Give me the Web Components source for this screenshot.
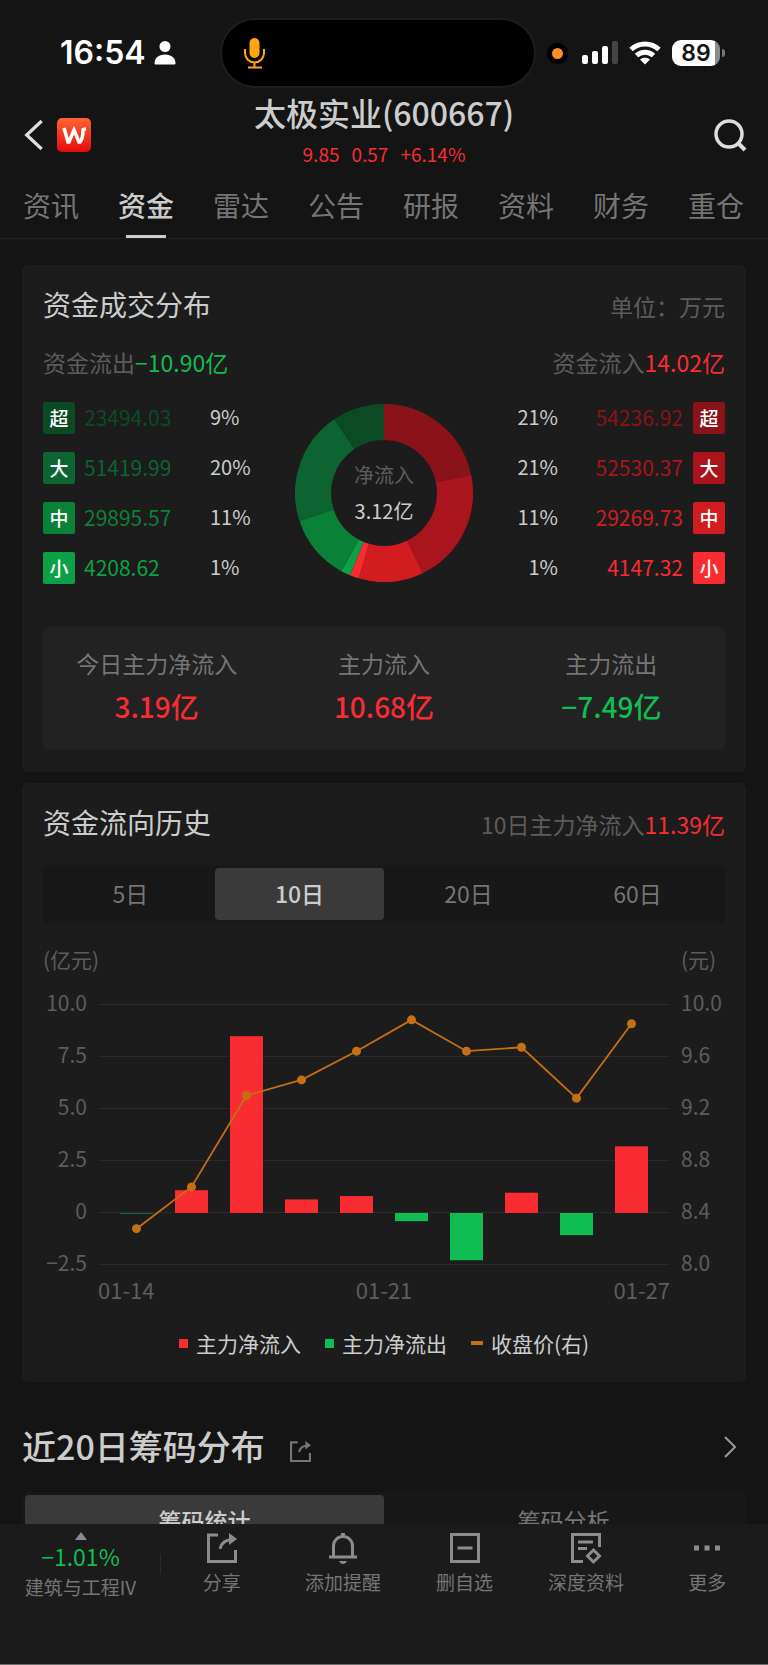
<!DOCTYPE html>
<html lang="zh-CN">
<head>
<meta charset="utf-8">
<meta name="viewport" content="width=device-width, initial-scale=1">
<title>太极实业(600667) 资金</title>
<style>
  :root {
    --bg: #141414;
    --card: #1c1c1c;
    --text: #cccccc;
    --muted: #757575;
    --dim: #5c5c5c;
    --red: #f92c32;
    --green: #0fbd53;
    --orange: #c46f13;
  }
  body {
    margin: 0;
    background: var(--bg);
    color: var(--text);
    font-family: "Noto Sans CJK SC", "Noto Sans", sans-serif;
  }
</style>
</head>
<body>
<stock-app></stock-app>

<script>
const ICONS = {
  back: '<path d="M21 1 5 16l16 15" stroke-width="3.500"/>',
  search: '<circle cx="15" cy="15" r="13" stroke-width="3.500"/><path d="m24 24 7 7" stroke-width="4"/>',
  share: '<path d="M11 2H1.500V28.500H28.500V17" stroke-width="3"/><path d="M13 16c1-6 5-9 12-9.500" stroke-width="3"/><path d="m22 0 8 6-8 6z" fill="currentColor" stroke="none"/>',
  bell: '<path d="M5.500 24V13a9.500 9.500 0 0 1 19 0v11M1 24h28" stroke-width="3"/><path d="M15 0v4" stroke-width="4"/><path d="M11 28h8c-1 2-2 3-4 3s-3-1-4-3z" fill="currentColor" stroke="none"/>',
  remove: '<path d="M1.500 1.500h27v27h-27zM7.500 15h15" stroke-width="3"/>',
  report: '<path d="M12 28.500H1.500V1.500h27V14M7 9h15M7 15.500h9" stroke-width="3"/><path d="m22.500 17 6 6-6 6-6-6z" stroke-width="3"/>',
  more: '<path d="M2 12.500h5v5H2zM12.500 12.500h5v5h-5zM23 12.500h5v5h-5z" fill="currentColor" stroke="none"/>',
  next: '<path d="m9 5 10 10L9 25" stroke-width="2"/>',
  mic: '<rect x="10.500" y="0" width="10" height="20" rx="5" fill="currentColor" stroke="none"/><path d="M6 11v4a9.500 9.500 0 0 0 19 0v-4M15.500 25v4M9 29.500h14" stroke-width="2"/>',
  user: '<g fill="currentColor" stroke="none"><circle cx="15" cy="8.500" r="5.500"/><path d="M4.500 25.500c0-5.500 4-9 10.500-9s10.500 3.500 10.500 9q0 1-1 1h-19q-1 0-1-1z"/></g>',
};

class AppIcon extends HTMLElement {
  connectedCallback() {
    const box = this.getAttribute('box') || '0 0 30 30';
    this.attachShadow({ mode: 'open' });
    this.shadowRoot.innerHTML = `
      <style>
        :host { display: block; width: 30px; height: 30px; flex: none; }
        svg { display: block; width: 100%; height: 100%; overflow: visible; }
      </style>
      <svg viewBox="${box}" fill="none" stroke="currentColor" aria-hidden="true">${ICONS[this.getAttribute('name')]}</svg>
    `;
  }
}

class StatusBar extends HTMLElement {
  constructor() {
    super();
    this.attachShadow({ mode: 'open' });
    this.shadowRoot.innerHTML = `
      <style>
        :host {
          display: flex;
          align-items: center;
          height: 70px;
          padding: 18px 43px 7px 60px;
          color: #fff;
          font-family: Inter, sans-serif;
        }
        .left { display: flex; align-items: center; gap: 4px; width: 160px; }
        .time { font-size: 32px; line-height: 40px; font-weight: 600; }
        app-icon { width: 30px; height: 30px; }
        .island {
          flex: 1;
          display: flex;
          align-items: center;
          box-sizing: border-box;
          height: 70px;
          padding-left: 17px;
          border: 2px solid #1d1d1d;
          border-radius: 35px;
          background: #000;
          color: #ffa50f;
        }
        .right { display: flex; align-items: center; margin-left: 11px; }
        .dot { width: 11px; height: 11px; border: 5px solid #000; border-radius: 50%; background: #ff8d28; }
        .signal { margin-left: 14px; }
        .wifi { margin-left: 10px; }
        .battery {
          display: flex;
          align-items: center;
          margin-left: 11px;
        }
        .level {
          width: 48px;
          border-radius: 9px;
          background: linear-gradient(to right, #fff 43px, #8b8b8b 43px);
          color: #141414;
          font-size: 23px;
          line-height: 26px;
          font-weight: 600;
          text-align: center;
        }
        .battery i { width: 3px; height: 8px; margin-left: 2px; border-radius: 0 4px 4px 0; background: #777; }
      </style>
      <div class="left"><span class="time">16:54</span><app-icon name="user"></app-icon></div>
      <div class="island"><app-icon name="mic"></app-icon></div>
      <div class="right">
        <span class="dot"></span>
        <svg class="signal" width="37" height="24" aria-hidden="true">
          <g fill="#fff"><rect y="14" width="6" height="9" rx="2"/><rect x="10" y="10" width="6" height="13" rx="2"/><rect x="20" y="5" width="6" height="18" rx="2"/></g>
          <rect x="30" y="0" width="6" height="23" rx="2" fill="#444"/>
        </svg>
        <svg class="wifi" width="32" height="24" fill="none" stroke="#fff" stroke-width="5" aria-hidden="true">
          <path d="M2 8.500C10 1 22 1 30 8.500"/><path d="M7.500 14.500c5-4.500 12-4.500 17 0" />
          <path d="M11 18.500c3-2.500 7-2.500 10 0l-5 5z" fill="#fff" stroke="none"/>
        </svg>
        <span class="battery"><span class="level">89</span><i></i></span>
      </div>
    `;
  }
}

class StockHeader extends HTMLElement {
  constructor() {
    super();
    this.attachShadow({ mode: 'open' });
    this.shadowRoot.innerHTML = `
      <style>
        :host {
          display: grid;
          grid-template-columns: 1fr auto 1fr;
          align-items: center;
          height: 80px;
          padding: 0 22px;
        }
        .left { display: flex; align-items: center; gap: 5px; }
        button { display: block; padding: 0; border: 0; background: none; color: #ddd; }
        .search { justify-self: end; }
        app-icon { width: 32px; height: 32px; }
        .back app-icon { width: 30px; }
        .logo { display: block; width: 34px; height: 34px; border-radius: 5px; background: linear-gradient(#ff6436, #e30b0b); }
        h1 { margin: 0; font-size: 32px; line-height: 34px; font-weight: 500; }
        .center { padding-bottom: 9px; text-align: center; }
        .quote { display: flex; justify-content: center; gap: 12px; margin-top: 13px; font-size: 19px; line-height: 24px; color: var(--red); }
      </style>
      <div class="left">
        <button class="back" aria-label="返回"><app-icon name="back" box="0 0 32 32"></app-icon></button>
        <a class="logo" href="#home" aria-label="首页">
          <svg width="34" height="34" viewBox="0 0 34 34" fill="none" stroke="#fff" stroke-width="3.500" aria-hidden="true"><path d="m7 10 4 14h1l5-12 5 12h1c3-3 3-8 3-12q0-1 3-1"/></svg>
        </a>
      </div>
      <div class="center">
        <h1>太极实业(600667)</h1>
        <div class="quote"><span>9.85</span><span>0.57</span><span>+6.14%</span></div>
      </div>
      <button class="search" aria-label="搜索"><app-icon name="search" box="0 0 32 32"></app-icon></button>
    `;
  }
}

class PageTabs extends HTMLElement {
  connectedCallback() {
    const active = this.getAttribute('active');
    const links = this.getAttribute('items').split(',')
      .map((t) => `<a href="#${t}"${t === active ? ' aria-current="page"' : ''}>${t}</a>`).join('');
    this.attachShadow({ mode: 'open' });
    this.shadowRoot.innerHTML = `
      <style>
        :host { display: block; border-bottom: 1px solid #232323; }
        nav { display: flex; justify-content: space-between; padding: 0 24px 0 23px; }
        a {
          display: flex;
          flex-direction: column;
          align-items: center;
          height: 53px;
          padding-top: 10px;
          color: var(--muted);
          font-size: 28px;
          line-height: 40px;
          text-decoration: none;
        }
        a[aria-current] { color: var(--text); font-weight: 500; }
        a[aria-current]::after { content: ""; width: 40px; height: 3px; margin-top: auto; background: var(--text); }
      </style>
      <nav>${links}</nav>
    `;
  }
}

class FundCard extends HTMLElement {
  constructor() {
    super();
    this.attachShadow({ mode: 'open' });
    this.shadowRoot.innerHTML = `
      <style>
        :host { display: block; padding: 19px 21px 22px; border-radius: 6px; background: var(--card); }
        header { display: flex; justify-content: space-between; align-items: center; }
        h2 { margin: 0; font-size: 28px; line-height: 40px; font-weight: 400; }
        .extra { padding-top: 4px; color: var(--dim); font-size: 23px; line-height: 34px; }
      </style>
      <header><h2><slot name="title"></slot></h2><div class="extra"><slot name="extra"></slot></div></header>
      <slot></slot>
    `;
  }
}

class OrderTable extends HTMLElement {
  connectedCallback() {
    const side = this.getAttribute('side');
    const isIn = side === 'in';
    const rows = FLOWS[side].map((r) => {
      const cells = [
        `<th scope="row"><span style="background:${r.color}">${r.name}</span></th>`,
        `<td class="amount" style="color:${r.color}">${r.amount.toFixed(2)}</td>`,
        `<td class="rate">${r.rate}%</td>`,
      ];
      return `<tr>${(isIn ? cells.reverse() : cells).join('')}</tr>`;
    }).join('');
    this.attachShadow({ mode: 'open' });
    this.shadowRoot.innerHTML = `
      <style>
        :host { display: block; }
        table { border-collapse: collapse; line-height: 32px; }
        th, td { height: 50px; padding: 0; text-align: left; }
        td { height: 47px; padding-bottom: 3px; }
        th span { display: block; width: 32px; height: 32px; border-radius: 2px; color: #fff; font-size: 19px; line-height: 31px; font-weight: 500; text-align: center; }
        .amount { width: 126px; padding-left: 9px; font-size: 21px; }
        .rate { font-size: 20px; }
        :host([side="in"]) table { margin-left: auto; }
        :host([side="in"]) td { text-align: right; }
        :host([side="in"]) .amount { width: 125px; padding-left: 0; padding-right: 10px; }
      </style>
      <table>${rows}</table>
    `;
  }
}

const FLOWS = {
  out: [
    { name: '超', amount: 23494.03, rate: 9, color: '#0c4a26' },
    { name: '大', amount: 51419.99, rate: 20, color: '#0c6430' },
    { name: '中', amount: 29895.57, rate: 11, color: '#098136' },
    { name: '小', amount: 4208.62, rate: 1, color: '#0da147' },
  ],
  in: [
    { name: '超', amount: 54236.92, rate: 21, color: '#891319' },
    { name: '大', amount: 52530.37, rate: 21, color: '#aa141c' },
    { name: '中', amount: 29269.73, rate: 11, color: '#d31c20' },
    { name: '小', amount: 4147.32, rate: 1, color: '#fa2b31' },
  ],
};

class DonutChart extends HTMLElement {
  constructor() {
    super();
    this.attachShadow({ mode: 'open' });
    this.shadowRoot.innerHTML = `
      <style>
        :host { display: grid; width: 178px; height: 178px; }
        svg, .label { grid-area: 1 / 1; }
        .label { align-self: center; text-align: center; font-size: 20px; line-height: 36px; }
        ::slotted(*) { display: block; }
      </style>
      <svg viewBox="0 0 178 178" fill="none" stroke-width="36" aria-hidden="true">${this._slices()}</svg>
      <div class="label"><slot></slot></div>
    `;
  }

  _slices() {
    // inflow runs clockwise from the top, outflow comes back in reverse order
    const parts = [...FLOWS.in, ...[...FLOWS.out].reverse()];
    const total = parts.reduce((sum, p) => sum + p.amount, 0);
    const point = (a) => `${89 + 71 * Math.sin(a)} ${89 - 71 * Math.cos(a)}`;
    let angle = 0;
    return parts.map((p) => {
      const end = angle + (p.amount / total) * Math.PI * 2;
      const d = `M${point(angle)}A71 71 0 0 1 ${point(end)}`;
      angle = end;
      return `<path d="${d}" stroke="${p.color}"/>`;
    }).join('');
  }
}

class StatItem extends HTMLElement {
  constructor() {
    super();
    this.attachShadow({ mode: 'open' });
    this.shadowRoot.innerHTML = `
      <style>
        :host { display: block; flex: 1; text-align: center; color: var(--muted); font-size: 23px; line-height: 32px; }
        strong { display: block; margin-top: 7px; color: var(--red); font-size: 28px; line-height: 40px; font-weight: 500; }
        :host([down]) strong { color: var(--green); }
      </style>
      <slot name="label"></slot>
      <strong><slot></slot></strong>
    `;
  }
}

class SegmentBar extends HTMLElement {
  connectedCallback() {
    const active = this.getAttribute('active');
    this.attachShadow({ mode: 'open' });
    this.shadowRoot.innerHTML = `
      <style>
        :host { display: flex; padding: 3px; border-radius: 6px; background: #181818; }
        button {
          flex: 1;
          height: 52px;
          padding: 0 0 3px;
          border: 0;
          border-radius: 4px;
          background: none;
          color: var(--muted);
          font: inherit;
          font-size: 23px;
          line-height: 32px;
        }
        button[aria-pressed="true"] { background: #3a3a3a; color: var(--text); font-weight: 500; }
      </style>
      ${this.getAttribute('items').split(',').map((t) => `<button aria-pressed="${t === active}">${t}</button>`).join('')}
    `;
    this.shadowRoot.addEventListener('click', (e) => this._select(e.target));
  }

  _select(target) {
    if (target.tagName !== 'BUTTON') {
      return;
    }
    this.shadowRoot.querySelectorAll('button').forEach((b) => b.setAttribute('aria-pressed', b === target));
  }
}

class FlowChart extends HTMLElement {
  constructor() {
    super();
    this._flow = [-0.02, 1.09, 8.46, 0.65, 0.81, -0.39, -2.26, 0.97, -1.06, 3.19];
    this._price = [8.28, 8.6, 9.3, 9.42, 9.64, 9.88, 9.64, 9.67, 9.28, 9.85];
    const labels = (list) => list.map((t) => `<span>${t}</span>`).join('');
    this.attachShadow({ mode: 'open' });
    this.shadowRoot.innerHTML = `
      <style>
        :host {
          display: grid;
          grid-template-columns: 44px 1fr 44px;
          column-gap: 11px;
          margin-top: 24px;
          color: var(--dim);
          font-size: 21px;
          line-height: 24px;
        }
        .unit { white-space: nowrap; margin-bottom: 29px; }
        .unit + .unit { grid-column: 3; }
        .axis { display: flex; flex-direction: column; justify-content: space-between; margin: -10px 0 -6px; }
        .axis.left { text-align: right; }
        svg { display: block; width: 100%; }
        .dates { grid-column: 2; display: flex; justify-content: space-between; margin-top: 9px; font-size: 22px; }
      </style>
      <span class="unit">(亿元)</span><span class="unit">(元)</span>
      <div class="axis left">${labels(['10.0', '7.5', '5.0', '2.5', '0', '−2.5'])}</div>
      <svg viewBox="0 0 572 268" role="img" aria-label="主力资金与收盘价">${this._plot()}</svg>
      <div class="axis">${labels(['10.0', '9.6', '9.2', '8.8', '8.4', '8.0'])}</div>
      <div class="dates">${labels(['01-14', '01-21', '01-27'])}</div>
    `;
  }

  _plot() {
    const x = (i) => 38.5 + i * 55;
    const yFlow = (v) => 213 - v * 20.9;
    const yPrice = (v) => 213 - (v - 8.4) * 130.5;
    const grid = [4, 56, 108, 160, 212, 264].map((y) => `<rect y="${y}" width="572" height="1" fill="#2a2a2a"/>`);
    const bars = this._flow.map((v, i) => {
      const h = Math.max(Math.abs(v) * 20.9, 0.5);
      return `<rect x="${x(i) - 16.5}" y="${v > 0 ? yFlow(v) : 213}" width="33" height="${h}" fill="var(${v > 0 ? '--red' : '--green'})"/>`;
    });
    const points = this._price.map((v, i) => `${x(i)},${yPrice(v)}`);
    const dots = this._price.map((v, i) => `<circle cx="${x(i)}" cy="${yPrice(v)}" r="4.500"/>`);
    return `${grid.join('')}${bars.join('')}
      <polyline points="${points.join(' ')}" fill="none" stroke="var(--orange)" stroke-width="1.800"/>
      <g fill="var(--orange)">${dots.join('')}</g>`;
  }
}

class ChartLegend extends HTMLElement {
  constructor() {
    super();
    this.attachShadow({ mode: 'open' });
    this.shadowRoot.innerHTML = `
      <style>
        :host { display: flex; justify-content: center; gap: 24px; margin: 28px 0 3px; font-size: 21px; line-height: 28px; }
        span { display: flex; align-items: center; gap: 8px; }
        i { width: 9px; height: 9px; background: var(--red); }
        .out i { background: var(--green); }
        .price i { width: 12px; height: 4px; background: var(--orange); }
      </style>
      <span><i></i>主力净流入</span>
      <span class="out"><i></i>主力净流出</span>
      <span class="price"><i></i>收盘价(右)</span>
    `;
  }
}

class SectionTitle extends HTMLElement {
  constructor() {
    super();
    this.attachShadow({ mode: 'open' });
    this.shadowRoot.innerHTML = `
      <style>
        :host { display: flex; align-items: center; color: var(--muted); }
        h2 { margin: 0; padding-bottom: 2px; color: var(--text); font-size: 34px; line-height: 48px; font-weight: 500; }
        button { display: block; padding: 0; border: 0; background: none; color: inherit; }
        .share { margin: 8px auto 0 25px; }
        .share app-icon { width: 21px; height: 21px; }
        .more { color: #999; }
      </style>
      <h2><slot></slot></h2>
      <button class="share" aria-label="分享"><app-icon name="share"></app-icon></button>
      <button class="more" aria-label="查看更多"><app-icon name="next"></app-icon></button>
    `;
  }
}

class BottomBar extends HTMLElement {
  constructor() {
    super();
    const actions = [['share', '分享'], ['bell', '添加提醒'], ['remove', '删自选'], ['report', '深度资料'], ['more', '更多']];
    this.attachShadow({ mode: 'open' });
    this.shadowRoot.innerHTML = `
      <style>
        :host {
          display: flex;
          flex: none;
          box-sizing: border-box;
          height: 141px;
          border-bottom: 1px solid #6c6c6c;
          background: #1b1b1b;
          color: var(--muted);
          font-size: 19px;
          line-height: 28px;
        }
        .sector {
          display: flex;
          flex-direction: column;
          align-items: center;
          width: 161px;
          box-sizing: border-box;
          padding: 8px 0 0;
          color: inherit;
          text-decoration: none;
        }
        .sector i { border: 6px solid transparent; border-top: 0; border-bottom: 8px solid #858b99; }
        .sector b { color: var(--green); font-size: 23px; line-height: 32px; font-weight: 400; }
        .sector span { margin-top: 1px; }
        .split { width: 1px; height: 20px; margin-top: 30px; margin-left: -1px; background: #2a2a2a; }
        button {
          flex: 1 1 0;
          display: flex;
          flex-direction: column;
          align-items: center;
          gap: 5px;
          padding: 9px 0 0;
          border: 0;
          background: none;
          color: inherit;
          font: inherit;
        }
        app-icon { color: #8c8c8c; }
      </style>
      <a class="sector" href="#sector"><i></i><b>−1.01%</b><span>建筑与工程IV</span></a>
      <div class="split"></div>
      ${actions.map(([icon, text]) => `<button><app-icon name="${icon}"></app-icon>${text}</button>`).join('')}
    `;
  }
}

class StockApp extends HTMLElement {
  constructor() {
    super();
    this.attachShadow({ mode: 'open' });
    this.shadowRoot.innerHTML = `
      <style>
        :host { display: flex; flex-direction: column; height: 100vh; }
        main {
          flex: 1;
          min-height: 0;
          overflow-y: auto;
          scrollbar-width: none;
          padding: 26px 22px 0;
        }
        fund-card + fund-card { margin-top: 11px; }
        .totals { display: flex; justify-content: space-between; margin-top: 22px; color: var(--dim); font-size: 23px; line-height: 32px; }
        .red { color: var(--red); }
        .green { color: var(--green); }
        .split { display: grid; grid-template-columns: 1fr auto 1fr; align-items: center; margin-top: 15px; }
        .dim { color: var(--dim); }
        .stats { display: flex; margin-top: 34px; padding: 20px 0 24px; border-radius: 6px; background: #222; }
        .days { margin-top: 23px; }
        section-title { margin: 40px 0 20px; }
      </style>
      <status-bar></status-bar>
      <stock-header></stock-header>
      <page-tabs items="资讯,资金,雷达,公告,研报,资料,财务,重仓" active="资金"></page-tabs>
      <main>
        <fund-card>
          <span slot="title">资金成交分布</span>
          <span slot="extra">单位：万元</span>
          <div class="totals">
            <span>资金流出<span class="green">−10.90亿</span></span>
            <span>资金流入<span class="red">14.02亿</span></span>
          </div>
          <div class="split">
            <order-table side="out"></order-table>
            <donut-chart><span class="dim">净流入</span><span>3.12亿</span></donut-chart>
            <order-table side="in"></order-table>
          </div>
          <div class="stats">
            <stat-item><span slot="label">今日主力净流入</span>3.19亿</stat-item>
            <stat-item><span slot="label">主力流入</span>10.68亿</stat-item>
            <stat-item down><span slot="label">主力流出</span>−7.49亿</stat-item>
          </div>
        </fund-card>
        <fund-card>
          <span slot="title">资金流向历史</span>
          <span slot="extra">10日主力净流入<span class="red">11.39亿</span></span>
          <segment-bar class="days" items="5日,10日,20日,60日" active="10日"></segment-bar>
          <flow-chart></flow-chart>
          <chart-legend></chart-legend>
        </fund-card>
        <section-title>近20日筹码分布</section-title>
        <segment-bar items="筹码统计,筹码分析" active="筹码统计"></segment-bar>
      </main>
      <bottom-bar></bottom-bar>
    `;
  }
}

customElements.define('app-icon', AppIcon);
customElements.define('status-bar', StatusBar);
customElements.define('stock-header', StockHeader);
customElements.define('page-tabs', PageTabs);
customElements.define('fund-card', FundCard);
customElements.define('order-table', OrderTable);
customElements.define('donut-chart', DonutChart);
customElements.define('stat-item', StatItem);
customElements.define('segment-bar', SegmentBar);
customElements.define('flow-chart', FlowChart);
customElements.define('chart-legend', ChartLegend);
customElements.define('section-title', SectionTitle);
customElements.define('bottom-bar', BottomBar);
customElements.define('stock-app', StockApp);
</script>
</body>
</html>
